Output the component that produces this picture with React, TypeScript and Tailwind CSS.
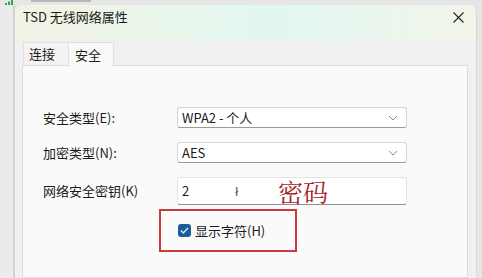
import React from 'react';

const font = { fontFamily: '"Segoe UI", "Noto Sans CJK SC", sans-serif' };

const Chevron = () => (
  <svg width="10" height="6" viewBox="0 0 10 6" className="text-[#8a8a8a]">
    <path d="M1 1l4 4 4-4" fill="none" stroke="currentColor" strokeWidth="1" />
  </svg>
);

const Select: React.FC<{ value: string }> = ({ value }) => (
  <div className="flex items-center justify-between w-[230px] h-[21px] bg-white border border-[#d5d5d5] border-b-[#9a9a9a] rounded-[3px] pl-[4px] pr-[8px] text-[13px] text-[#1a1a1a]">
    <span>{value}</span>
    <Chevron />
  </div>
);

export default function App() {
  return (
    <div className="w-[482px] h-[278px] overflow-hidden bg-[#e6e6e6] flex flex-col text-[#1b1b1b] font-['Liberation_Sans','Noto_Sans_CJK_SC',sans-serif]">
      {/* background window strip */}
      <div className="h-[5px] flex items-start pl-[5px] gap-[14px] shrink-0">
        <svg width="12" height="5" viewBox="0 0 12 5">
          <rect x="0" y="3" width="2" height="2" fill="#3aa14a" />
          <rect x="3" y="1.5" width="2" height="3.5" fill="#3aa14a" />
          <rect x="6" y="0" width="2" height="5" fill="#3aa14a" />
        </svg>
        <div className="w-[60px] h-[2px] bg-[#9a9a9a] opacity-60" />
      </div>
      <div className="flex flex-1 min-h-0">
        <div className="w-[15px] shrink-0 flex">
          <div className="w-[13px] bg-[#ebebeb]" />
          <div className="w-[2px] bg-[#d4d4d4]" />
        </div>
        {/* dialog */}
        <div className="w-[462px] shrink-0 flex flex-col bg-[#f0f0f0] rounded-t-[7px] border-r border-[#d8d8d8] overflow-hidden">
          <div className="h-[35px] shrink-0 flex items-start justify-between pl-[8px] pr-[12px] pt-[3px] bg-[linear-gradient(90deg,#f2f3e4_0%,#eaf6ea_30%,#e1f6f1_55%,#e8f6ee_75%,#f3f5ea_100%)]">
            <span className="text-[13px] leading-[18px]" style={font}>TSD 无线网络属性</span>
            <svg width="11" height="11" viewBox="0 0 11 11" className="mt-[4px]">
              <path d="M0.5 0.5l10 10M10.5 0.5l-10 10" stroke="#222" strokeWidth="1.1" />
            </svg>
          </div>
          <div className="flex items-end pl-[8px] h-[25px] shrink-0 text-[13px]" style={font}>
            <div className="w-[45px] h-[23px] pl-[5px] flex items-center bg-[#f3f3f3] border-l border-t border-[#e0e0e0]">连接</div>
            <div className="w-[46px] h-[24px] pl-[6px] flex items-center bg-[#f9f9f9] border-l border-t border-r border-[#e0e0e0] -mb-px relative z-10">安全</div>
          </div>
          <div className="ml-[7px] w-[446px] flex-1 bg-[#fafafa] border border-[#dedede] pl-[20px] pt-[41px] text-[13px]" style={font}>
            <div className="flex items-center h-[21px]">
              <span className="w-[134px]">安全类型(E):</span>
              <Select value="WPA2 - 个人" />
            </div>
            <div className="flex items-center h-[21px] mt-[14px]">
              <span className="w-[134px]">加密类型(N):</span>
              <Select value="AES" />
            </div>
            <div className="flex items-center h-[28px] mt-[14px]">
              <span className="w-[134px]">网络安全密钥(K)</span>
              <div className="relative w-[230px] h-[28px] bg-white border border-[#e2e2e2] border-b-[#8e8e8e] rounded-[3px] pl-[4px] flex items-center">
                <span>2</span>
                <span className="ml-[46px] text-[#555]">ł</span>
                <span className="absolute left-[100px] top-[-2px] text-[25px] leading-[30px] text-[#a3232a] font-['Noto_Serif_CJK_SC','Noto_Sans_CJK_SC',serif]">密码</span>
              </div>
            </div>
            <div className="ml-[116px] mt-[4px] w-[138px] h-[43px] border-2 border-[#c73a3f] pl-[17px] flex items-center gap-[4px]">
              <div className="w-[13px] h-[13px] rounded-[3px] bg-[#1c5c9c] flex items-center justify-center">
                <svg width="9" height="7" viewBox="0 0 9 7">
                  <path d="M1 3.5l2.3 2.3L8 1" fill="none" stroke="white" strokeWidth="1.2" />
                </svg>
              </div>
              <span>显示字符(H)</span>
            </div>
          </div>
        </div>
      </div>
    </div>
  );
}
